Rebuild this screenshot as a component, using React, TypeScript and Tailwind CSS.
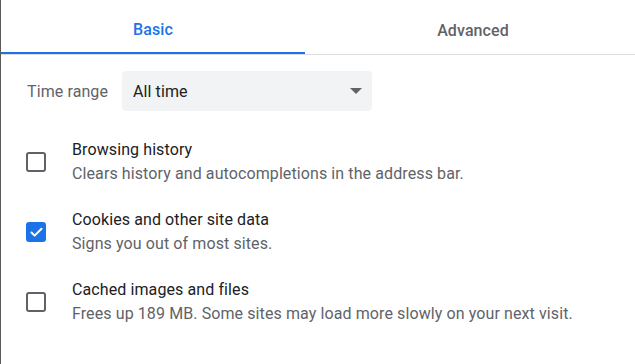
import { Check } from 'lucide-react'

const items = [
  { title: 'Browsing history', desc: 'Clears history and autocompletions in the address bar.', checked: false },
  { title: 'Cookies and other site data', desc: 'Signs you out of most sites.', checked: true },
  { title: 'Cached images and files', desc: 'Frees up 189 MB. Some sites may load more slowly on your next visit.', checked: false },
]

function Checkbox({ checked }: { checked: boolean }) {
  if (checked) {
    return (
      <div className="w-5 h-5 rounded-[3px] bg-[#1a73e8] flex items-center justify-center flex-shrink-0">
        <Check size={15} strokeWidth={3.2} className="text-white" />
      </div>
    )
  }
  return <div className="w-5 h-5 rounded-[3px] border-2 border-[#5f6368] flex-shrink-0" />
}

export default function App() {
  return (
    <div
      className="w-[635px] h-[364px] bg-white border-l border-[#5a5a5a] overflow-hidden tracking-[0.1px]"
      style={{ fontFamily: 'Roboto, "Liberation Sans", sans-serif' }}
    >
      {/* Tabs */}
      <div className="flex border-b border-[#dadce0] w-[640px]">
        <div className="w-[304px] h-[54px] flex items-center justify-center text-[16px] font-medium text-[#1a73e8] border-b-2 border-[#1a73e8] -mb-px pt-[8px]">
          Basic
        </div>
        <div className="w-[336px] h-[54px] flex items-center justify-center text-[16px] font-medium text-[#5f6368] pt-[8px]">
          Advanced
        </div>
      </div>

      {/* Time range */}
      <div className="flex items-center pl-[26px] pt-[16px]">
        <span className="text-[16px] text-[#5f6368] w-[95px] pt-px">Time range</span>
        <div className="w-[250px] h-[40px] rounded-[4px] bg-[#f1f3f4] flex items-center pl-[11px] pr-[10px]">
          <span className="text-[16px] text-[#202124] flex-1 pt-px">All time</span>
          <svg width="12" height="6" viewBox="0 0 12 6">
            <path d="M0 0 L12 0 L6 6 Z" fill="#5f6368" />
          </svg>
        </div>
      </div>

      {/* Checkbox rows */}
      <div className="flex flex-col gap-[22px] pt-[27px]">
        {items.map(item => (
          <div key={item.title} className="flex items-center pl-[25px]">
            <Checkbox checked={item.checked} />
            <div className="ml-[26px] flex flex-col">
              <span className="text-[16px] leading-[24px] text-[#202124]">{item.title}</span>
              <span className="text-[16px] leading-[24px] text-[#5f6368]">{item.desc}</span>
            </div>
          </div>
        ))}
      </div>
    </div>
  )
}
